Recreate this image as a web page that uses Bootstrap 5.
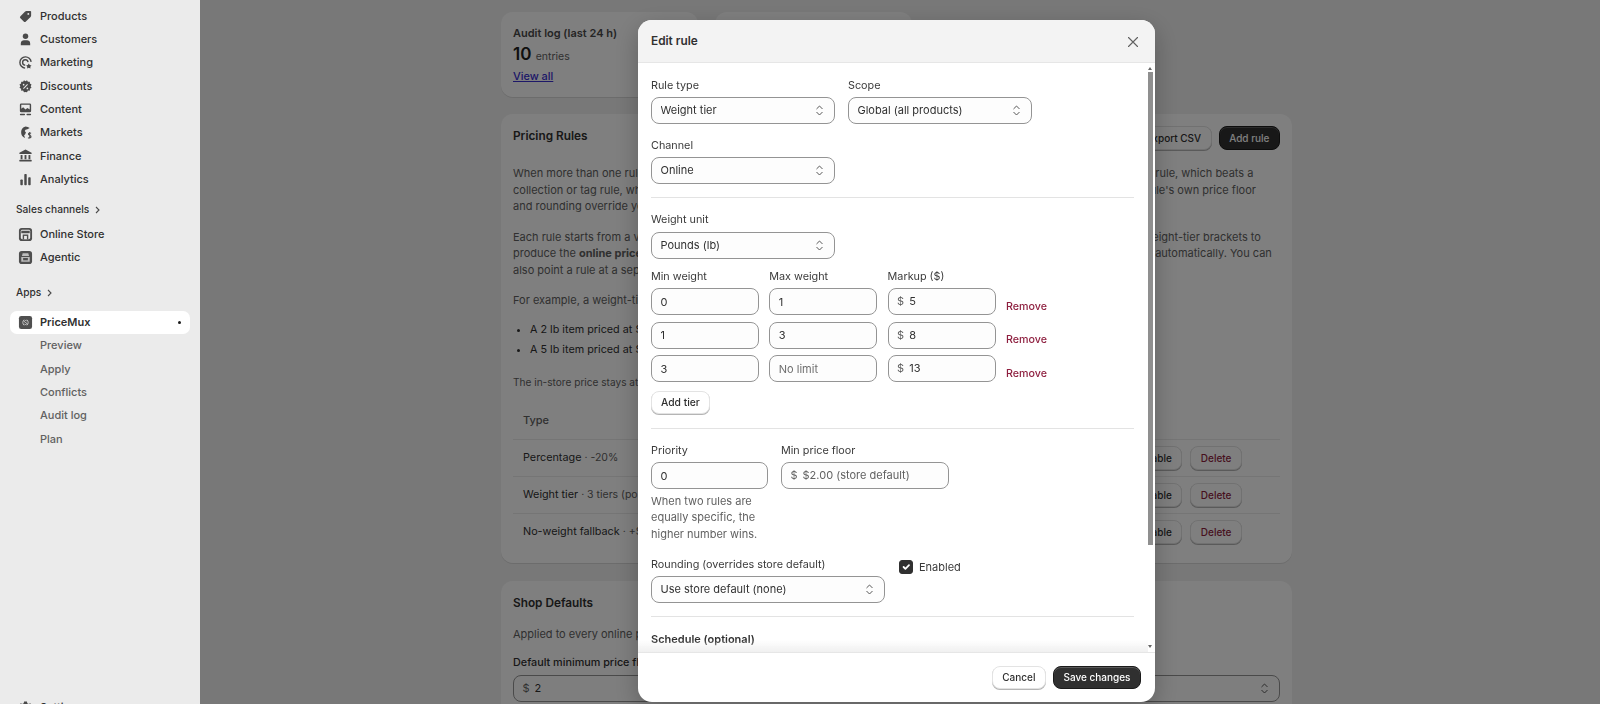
<!DOCTYPE html>
<html lang="en">
<head>
<meta charset="UTF-8">
<title>PriceMux - Edit rule</title>
<link href="https://cdn.jsdelivr.net/npm/bootstrap@5.3.0/dist/css/bootstrap.min.css" rel="stylesheet">
<style>
    html, body { height: 100%; }
    body { background: #f1f1f1; font-family: Inter, "Liberation Sans", sans-serif; font-size: 11px; color: #303030; overflow: hidden; }

    /* sidebar */
    .side { width: 200px; height: 704px; background: #ebebeb; position: relative; z-index: 1060; overflow: hidden; padding: 4.5px 10px 0; flex: none; }
    .side-item { height: 23.3px; display: flex; align-items: center; color: #303030; font-weight: 500; font-size: 11px; padding-left: 8px; text-decoration: none; flex: none; }
    .side-item svg { width: 15px; height: 15px; margin-right: 7px; flex: none; color: #4a4a4a; }
    .side-sub { height: 23.3px; display: flex; align-items: center; padding-left: 30px; color: #616161; font-size: 11px; font-weight: 450; flex: none; }
    .side-head { height: 16px; display: flex; align-items: center; gap: 5px; padding-left: 6px; font-size: 10.2px; font-weight: 500; color: #303030; flex: none; }
    .side-head svg { width: 7px; height: 8px; }
    .side-active { background: #fff; border-radius: 7px; height: 23px; font-weight: 600; }
    .side-dot { width: 3.5px; height: 3.5px; background: #1a1a1a; border-radius: 50%; margin-left: auto; margin-right: 9px; }

    /* page behind the dialog */
    .page { width: 1400px; padding: 12px 0 0 301px; flex: none; }
    .panel { background: #fff; border-radius: 12px; padding: 12px; box-shadow: 0 1px 0 rgba(0,0,0,.1); }
    .stat-panel { width: 197px; height: 85px; padding-top: 14px; }
    .stat-title { font-weight: 600; font-size: 11px; color: #4a4a4a; line-height: 14px; margin-bottom: 3px; }
    .stat-num { font-size: 17px; font-weight: 600; color: #202020; line-height: 22px; }
    .stat-unit { font-size: 10.5px; font-weight: 400; color: #616161; }
    .stat-link { display: block; font-size: 10.9px; font-weight: 500; color: #3a2fd0; line-height: 16px; }
    .rules-panel { width: 791px; height: 449px; margin-top: 17px; }
    .panel-title { font-size: 11.8px; font-weight: 600; color: #303030; margin: 1px 0 0; line-height: 18px; }
    .rules-text { font-size: 11px; line-height: 16.7px; color: #616161; margin: 0 0 13.5px; white-space: nowrap; }
    .rules-list { font-size: 10.8px; line-height: 20px; color: #303030; padding-left: 17px; margin: 0 0 14px; }
    .btn-px { height: 24px; padding: 0 9.5px; font-size: 10px; font-weight: 550; border-radius: 8px; background: #fff; color: #303030; border: 1px solid #e3e3e3; box-shadow: 0 1px 0 #b5b5b5; line-height: 22px; }
    .btn-px-dark { background: #303030; border-color: #1a1a1a; color: #fff; box-shadow: inset 0 1px 0 rgba(255,255,255,.2); }
    .btn-px-danger { color: #8e1f3f; }
    .rule-row { border-top: 1px solid #ebebeb; height: 37.3px; padding: 0 38px 0 10px; font-size: 10.8px; font-weight: 400; }
    .rule-head { height: 36.5px; padding: 0 10px; font-size: 11px; font-weight: 500; color: #616161; margin-top: 11px; }
    .rule-meta { color: #616161; font-size: 10.5px; }
    .defaults-panel { width: 791px; height: 200px; margin-top: 18px; }
    .defaults-label { font-size: 10.8px; font-weight: 500; line-height: 16px; margin-bottom: 4px; }

    /* dialog */
    .modal-backdrop.over-page { left: 200px; width: 1400px; background: #000; opacity: .5; }
    .modal.edit-modal { display: block; left: 200px; width: 1400px; overflow: hidden; }
    .edit-modal .modal-dialog { max-width: 517px; margin: 20px 0 0 438px; }
    .edit-modal .modal-content { height: 682px; border: 0; border-radius: 14px; overflow: hidden; box-shadow: 0 8px 24px rgba(0,0,0,.25); position: relative; }
    .edit-modal .modal-header { height: 43px; flex: none; padding: 2px 13px 0; background: #f3f3f3; border-bottom: 1px solid #e6e6e6; border-radius: 0; }
    .edit-modal .modal-title { font-size: 11.8px; font-weight: 600; color: #303030; }
    .close-x { width: 16px; height: 16px; padding: 0; margin-right: 1px; background: none; border: 0; color: #616161; display: flex; }
    .edit-modal .modal-body { padding: 14.5px 0 14px 13px; overflow: hidden; flex: 1 1 0; min-height: 0; }
    .edit-modal .modal-footer { height: 50px; flex: none; padding: 13px 14px 0; gap: 7px; border-top: 1px solid #e6e6e6; border-radius: 0; align-items: flex-start; }
    .edit-modal .modal-footer > * { margin: 0; }
    .edit-modal .modal-footer .btn-px { height: 23px; line-height: 21px; }
    .body-fade { position: absolute; left: 0; right: 7px; bottom: 50px; height: 12px; background: linear-gradient(to bottom, rgba(240,240,240,0), rgba(238,238,238,.9)); pointer-events: none; }
    .scroll-thumb { position: absolute; left: 510px; top: 52px; width: 5px; height: 473px; background: #8f8f8f; }
    .scroll-up, .scroll-down { position: absolute; left: 510px; width: 0; height: 0; border-left: 2.5px solid transparent; border-right: 2.5px solid transparent; }
    .scroll-up { top: 47px; border-bottom: 3px solid #666; }
    .scroll-down { top: 625px; border-top: 3px solid #666; }

    .form-wrap { width: 483px; }
    .fld-label { display: block; font-size: 10.8px; line-height: 16px; margin: 0 0 3.5px; color: #3a3a3a; font-weight: 400; }
    .fld-ctl { height: 27px; min-height: 0; padding: 0 8.5px; font-size: 11px; line-height: 25px; color: #303030; background-color: #fdfdfd; border: 1px solid #949494; border-radius: 8px; box-shadow: none; }
    select.fld-ctl { padding-right: 20px; background-image: url("data:image/svg+xml,%3Csvg xmlns='http://www.w3.org/2000/svg' viewBox='0 0 10 16'%3E%3Cpath d='M2 6l3-3 3 3M2 10l3 3 3-3' fill='none' stroke='%23555' stroke-width='1.1' stroke-linecap='round' stroke-linejoin='round'/%3E%3C/svg%3E"); background-size: 9px 15px; background-position: right 10px center; }
    .fld-ctl::placeholder { color: #6f6f6f; opacity: 1; }
    .money { display: flex; align-items: center; gap: 5px; }
    .money span { color: #616161; }
    .money input { border: 0; background: none; outline: 0; padding: 0; width: 100%; min-width: 0; font-size: 11px; color: #303030; }
    .money input::placeholder { color: #616161; opacity: 1; }
    .w-sel { width: 184px; }
    .w-tier { width: 108px; }
    .w-prio { width: 117px; }
    .w-floor { width: 168px; }
    .w-round { width: 234px; }
    .tier-labels { display: flex; gap: 10.3px; }
    .tier-row { display: flex; gap: 10.3px; margin-bottom: 6.5px; }
    .tier-remove { align-self: flex-end; margin: 0 0 .5px 0; color: #8e1f3f; font-size: 10.7px; font-weight: 500; line-height: 16px; text-decoration: none; }
    .btn-tier { height: 23px; line-height: 21px; font-size: 10.3px; padding: 0 9px; margin-top: 2.5px; }
    .form-rule { margin: 13px 0 14px; border-color: #e3e3e3; opacity: 1; width: 483px; }
    .help-text { font-size: 11px; line-height: 16.7px; color: #616161; margin-top: 3.5px; width: 117px; }
    .enable-check { margin: 2.5px 0 0; padding: 0; display: flex; align-items: center; gap: 6px; min-height: 0; }
    .enable-check .form-check-input { width: 14px; height: 14px; margin: 0; float: none; background-color: #303030; border-color: #303030; border-radius: 3px; }
    .enable-check .form-check-label { font-size: 11px; color: #3a3a3a; }
    .sched-title { font-size: 11px; font-weight: 600; line-height: 16px; margin: 0 0 8px; }
</style>
</head>
<body>
<div class="d-flex">
    <!-- Sidebar -->
    <aside class="side d-flex flex-column">
        <a class="side-item" href="#"><svg viewBox="0 0 16 16" fill="currentColor"><path d="M9 2h4a1 1 0 0 1 1 1v4a2 2 0 0 1-.6 1.4l-5 5a1.600 1.600 0 0 1-2.300 0L2.600 9.900a1.600 1.600 0 0 1 0-2.300l5-5A2 2 0 0 1 9 2zm2 2.200a1 1 0 1 0 0 2 1 1 0 0 0 0-2z" fill-rule="evenodd"/></svg>Products</a>
        <a class="side-item" href="#"><svg viewBox="0 0 16 16" fill="currentColor"><circle cx="8" cy="4.600" r="2.900"/><path d="M3 14v-1.800C3 10 4.600 8.800 6.400 8.800h3.200c1.800 0 3.400 1.200 3.400 3.400V14z"/></svg>Customers</a>
        <a class="side-item" href="#"><svg viewBox="0 0 16 16" fill="none" stroke="currentColor" stroke-width="1.500"><path d="M14 7.400A6 6 0 1 0 7.600 14"/><path d="M10.700 7.600A2.900 2.900 0 1 0 7.700 10.900"/><path d="M11.500 9l1 1.700 1.900.4-1.300 1.400.2 1.900-1.800-.8-1.800.8.2-1.900-1.300-1.400 1.900-.4z" fill="currentColor" stroke="none"/></svg>Marketing</a>
        <a class="side-item" href="#"><svg viewBox="0 0 16 16"><path fill="currentColor" d="M6.400 1.200 8 2.300l1.600-1.100 1 1.700 2-.1.1 2 1.700 1-.9 1.800.9 1.800-1.700 1-.1 2-2-.1-1 1.700L8 13.900l-1.600.1-1-1.700-2 .1-.1-2-1.700-1 .9-1.800-.9-1.800 1.700-1 .1-2 2 .1z"/><path d="M5.800 10.200l4.400-4.400" stroke="#ebebeb" stroke-width="1.100"/><circle cx="6" cy="6" r=".9" fill="#ebebeb"/><circle cx="10" cy="10" r=".9" fill="#ebebeb"/></svg>Discounts</a>
        <a class="side-item" href="#"><svg viewBox="0 0 16 16" fill="currentColor"><path fill-rule="evenodd" d="M3.500 1.500h9A1.500 1.500 0 0 1 14 3v6.500a1.500 1.500 0 0 1-1.500 1.500h-9A1.500 1.500 0 0 1 2 9.500V3a1.500 1.500 0 0 1 1.500-1.500zM3.500 3v4.200L5.500 5.500 8 8l2-1.500 2.500 1.500V3z"/><rect x="2" y="12.500" width="5.500" height="1.500" rx=".7"/><rect x="9" y="12.500" width="5" height="1.500" rx=".7"/></svg>Content</a>
        <a class="side-item" href="#"><svg viewBox="0 0 16 16" fill="currentColor"><path d="M8 1.500a6.500 6.500 0 0 1 4.500 1.800L10 4.500l-2 .5-.8 1.500 1.300 1.500-1 2-1 1 1 2.800A6.500 6.500 0 0 1 8 1.500z"/><path d="M10.800 13.400c.4.500 3.100.6 3.100-1 0-1.700-2.800-1.200-2.800-2.700 0-1.400 2.400-1.300 2.800-.8M12.500 7.500v7" fill="none" stroke="currentColor" stroke-width="1.100"/></svg>Markets</a>
        <a class="side-item" href="#"><svg viewBox="0 0 16 16" fill="currentColor"><path d="M8 1.500 14.500 5v1.500h-13V5z"/><rect x="2.800" y="7.500" width="2" height="4.500"/><rect x="7" y="7.500" width="2" height="4.500"/><rect x="11.200" y="7.500" width="2" height="4.500"/><rect x="1.500" y="12.500" width="13" height="2" rx=".5"/></svg>Finance</a>
        <a class="side-item" href="#"><svg viewBox="0 0 16 16" fill="currentColor"><rect x="2.500" y="8" width="2.600" height="6" rx=".8"/><rect x="6.700" y="2" width="2.600" height="12" rx=".8"/><rect x="10.900" y="5.500" width="2.600" height="8.500" rx=".8"/></svg>Analytics</a>

        <div class="side-head" style="margin-top:11px;margin-bottom:4.5px">Sales channels <svg viewBox="0 0 7 8" fill="none" stroke="#4a4a4a" stroke-width="1.100"><path d="M2 1l3 3-3 3"/></svg></div>
        <a class="side-item" href="#"><svg viewBox="0 0 16 16"><rect x="1" y="1" width="14" height="14" rx="3" fill="#4f4f4f"/><rect x="3" y="3" width="10" height="10" rx="1.500" fill="#ebebeb"/><path d="M3.500 4h9v2.600H3.500zM5 8h6v5H5z" fill="#4f4f4f"/><path d="M6.500 9.500h3V13h-3z" fill="#ebebeb"/></svg>Online Store</a>
        <a class="side-item" href="#"><svg viewBox="0 0 16 16"><rect x="1" y="1" width="14" height="14" rx="3" fill="#4f4f4f"/><path d="M5 3.500h6l.8 3H4.200zM3.500 7.500h9v5h-9z" fill="#bdbdbd"/><rect x="5.500" y="8.500" width="5" height="2.500" fill="#4f4f4f"/></svg>Agentic</a>

        <div class="side-head" style="margin-top:16px;margin-bottom:10px">Apps <svg viewBox="0 0 7 8" fill="none" stroke="#4a4a4a" stroke-width="1.100"><path d="M2 1l3 3-3 3"/></svg></div>
        <a class="side-item side-active" href="#"><svg viewBox="0 0 16 16"><rect x="1" y="1" width="14" height="14" rx="2.500" fill="#4f4f4f"/><path d="M6.500 5a4 4 0 0 0 0 6M9.500 5a4 4 0 0 1 0 6" fill="none" stroke="#d5d5d5" stroke-width=".9"/><path d="M9.300 6.300C8.800 5.600 6.900 5.600 6.900 6.900c0 1.400 2.400.9 2.400 2.300 0 1.200-1.900 1.200-2.500.5" fill="none" stroke="#d5d5d5" stroke-width=".9"/></svg>PriceMux<span class="side-dot"></span></a>
        <div class="side-sub">Preview</div>
        <div class="side-sub">Apply</div>
        <div class="side-sub">Conflicts</div>
        <div class="side-sub">Audit log</div>
        <div class="side-sub">Plan</div>
        <a class="side-item mt-auto settings-row" href="#" style="margin-bottom:-15px"><svg viewBox="0 0 16 16" fill="currentColor"><path fill-rule="evenodd" d="M6.500 1.500h3l.4 1.900 1.500.8 1.800-.7 1.500 2.600-1.400 1.200v1.500l1.400 1.300-1.500 2.500-1.800-.6-1.500.8-.4 1.900h-3l-.4-1.900-1.500-.8-1.800.6L1.300 10l1.400-1.300V7.300L1.300 6.100l1.500-2.600 1.800.7 1.500-.8zM8 6a2 2 0 1 0 0 4 2 2 0 0 0 0-4z"/></svg>Settings</a>
    </aside>

    <!-- Page behind the dialog -->
    <main class="page">
        <div class="d-flex" style="gap:17px">
            <div class="panel stat-panel">
                <div class="stat-title">Audit log (last 24 h)</div>
                <div class="stat-num">10 <span class="stat-unit">entries</span></div>
                <a class="stat-link" href="#">View all</a>
            </div>
            <div class="panel stat-panel">
                <div class="stat-title">Active rules</div>
                <div class="stat-num">3</div>
            </div>
        </div>

        <section class="panel rules-panel">
            <div class="d-flex justify-content-between align-items-start" style="margin-bottom:15px">
                <h2 class="panel-title">Pricing Rules</h2>
                <div class="d-flex" style="gap:7px">
                    <button class="btn btn-px">Export CSV</button>
                    <button class="btn btn-px btn-px-dark">Add rule</button>
                </div>
            </div>
            <p class="rules-text">When more than one rule applies to any product, the most specific rule wins: a product or variant rule beats a product-type rule, which beats a<br>collection or tag rule, which beats a global rule. Among equally specific rules, the higher priority wins, and after that each rule's own price floor<br>and rounding override your store defaults.</p>
            <p class="rules-text">Each rule starts from a variant's current base price, then applies its percentage change, its fixed dollar amount or its own weight-tier brackets to<br>produce the <strong>online price</strong>. The in-store price is left well alone, and online prices in your own store will then stay fully in sync automatically. You can<br>also point a rule at a separate price list.</p>
            <p class="rules-text" style="margin-bottom:11.5px">For example, a weight-tier rule adds a markup to each item according to its weight:</p>
            <ul class="rules-list">
                <li>A 2 lb item priced at $10 sells online for $18.</li>
                <li>A 5 lb item priced at $10 sells online for $23.</li>
            </ul>
            <p class="rules-text" style="font-size:10.1px;margin-bottom:0">The in-store price stays at $10.</p>
            <div class="rule-head d-flex align-items-center">Type</div>
            <div class="rule-row d-flex align-items-center justify-content-between"><span>Percentage <span class="rule-meta">· -20%</span></span><span class="d-flex gap-2"><button class="btn btn-px">Disable</button><button class="btn btn-px btn-px-danger">Delete</button></span></div>
            <div class="rule-row d-flex align-items-center justify-content-between"><span>Weight tier <span class="rule-meta">· 3 tiers (pounds)</span></span><span class="d-flex gap-2"><button class="btn btn-px">Disable</button><button class="btn btn-px btn-px-danger">Delete</button></span></div>
            <div class="rule-row d-flex align-items-center justify-content-between"><span>No-weight fallback <span class="rule-meta">· +$5</span></span><span class="d-flex gap-2"><button class="btn btn-px">Disable</button><button class="btn btn-px btn-px-danger">Delete</button></span></div>
        </section>

        <section class="panel defaults-panel">
            <h2 class="panel-title" style="margin-bottom:14px">Shop Defaults</h2>
            <p class="rules-text" style="margin-bottom:12.5px">Applied to every online price unless a rule sets its own floor or rounding. Rules may override either of these.</p>
            <div class="d-flex" style="gap:12px">
                <div style="flex:1">
                    <div class="defaults-label">Default minimum price floor</div>
                    <div class="form-control fld-ctl money"><span>$</span><input value="2" aria-label="Default minimum price floor"></div>
                </div>
                <div style="flex:1">
                    <div class="defaults-label">Default rounding</div>
                    <select class="form-select fld-ctl" aria-label="Default rounding"><option>None</option></select>
                </div>
            </div>
        </section>
    </main>
</div>

<div class="modal-backdrop over-page"></div>

<!-- Edit rule dialog -->
<div class="modal edit-modal" tabindex="-1">
    <div class="modal-dialog">
        <div class="modal-content">
            <div class="modal-header">
                <h5 class="modal-title">Edit rule</h5>
                <button class="close-x" aria-label="Close"><svg viewBox="0 0 16 16" fill="none" stroke="currentColor" stroke-width="1.100" stroke-linecap="round"><path d="M3.500 3.500l9 9M12.500 3.500l-9 9"/></svg></button>
            </div>
            <div class="modal-body">
                <div class="form-wrap">
                    <div class="d-flex" style="gap:13px">
                        <div class="w-sel">
                            <label class="fld-label">Rule type</label>
                            <select class="form-select fld-ctl"><option>Weight tier</option></select>
                        </div>
                        <div class="w-sel">
                            <label class="fld-label">Scope</label>
                            <select class="form-select fld-ctl"><option>Global (all products)</option></select>
                        </div>
                    </div>
                    <div class="w-sel" style="margin-top:13.5px">
                        <label class="fld-label">Channel</label>
                        <select class="form-select fld-ctl"><option>Online</option></select>
                    </div>
                    <hr class="form-rule">

                    <div class="w-sel" style="margin-bottom:10px">
                        <label class="fld-label">Weight unit</label>
                        <select class="form-select fld-ctl"><option>Pounds (lb)</option></select>
                    </div>
                    <div class="tier-labels">
                        <label class="fld-label w-tier">Min weight</label>
                        <label class="fld-label w-tier">Max weight</label>
                        <label class="fld-label w-tier">Markup ($)</label>
                    </div>
                    <div class="tier-row">
                        <input class="form-control fld-ctl w-tier" value="0">
                        <input class="form-control fld-ctl w-tier" value="1">
                        <div class="form-control fld-ctl money w-tier"><span>$</span><input value="5"></div>
                        <a class="tier-remove" href="#">Remove</a>
                    </div>
                    <div class="tier-row">
                        <input class="form-control fld-ctl w-tier" value="1">
                        <input class="form-control fld-ctl w-tier" value="3">
                        <div class="form-control fld-ctl money w-tier"><span>$</span><input value="8"></div>
                        <a class="tier-remove" href="#">Remove</a>
                    </div>
                    <div class="tier-row">
                        <input class="form-control fld-ctl w-tier" value="3">
                        <input class="form-control fld-ctl w-tier" placeholder="No limit">
                        <div class="form-control fld-ctl money w-tier"><span>$</span><input value="13"></div>
                        <a class="tier-remove" href="#">Remove</a>
                    </div>
                    <button class="btn btn-px btn-tier">Add tier</button>
                    <hr class="form-rule" style="margin-top:14px;margin-bottom:13.5px">

                    <div class="d-flex" style="gap:13px">
                        <div class="w-prio">
                            <label class="fld-label">Priority</label>
                            <input class="form-control fld-ctl" value="0">
                            <div class="help-text">When two rules are equally specific, the higher number wins.</div>
                        </div>
                        <div class="w-floor">
                            <label class="fld-label">Min price floor</label>
                            <div class="form-control fld-ctl money"><span>$</span><input placeholder="$2.00 (store default)"></div>
                        </div>
                    </div>
                    <div class="d-flex" style="gap:14px;margin-top:14px">
                        <div class="w-round">
                            <label class="fld-label">Rounding (overrides store default)</label>
                            <select class="form-select fld-ctl"><option>Use store default (none)</option></select>
                        </div>
                        <div class="form-check enable-check align-self-start">
                            <input class="form-check-input" type="checkbox" id="ruleEnabled" checked>
                            <label class="form-check-label" for="ruleEnabled">Enabled</label>
                        </div>
                    </div>
                    <hr class="form-rule">

                    <div class="sched-title">Schedule (optional)</div>
                </div>
            </div>
            <div class="body-fade"></div>
            <div class="scroll-up"></div>
            <div class="scroll-thumb"></div>
            <div class="scroll-down"></div>
            <div class="modal-footer">
                <button class="btn btn-px">Cancel</button>
                <button class="btn btn-px btn-px-dark">Save changes</button>
            </div>
        </div>
    </div>
</div>

<script src="https://cdn.jsdelivr.net/npm/bootstrap@5.3.0/dist/js/bootstrap.bundle.min.js"></script>
</body>
</html>
